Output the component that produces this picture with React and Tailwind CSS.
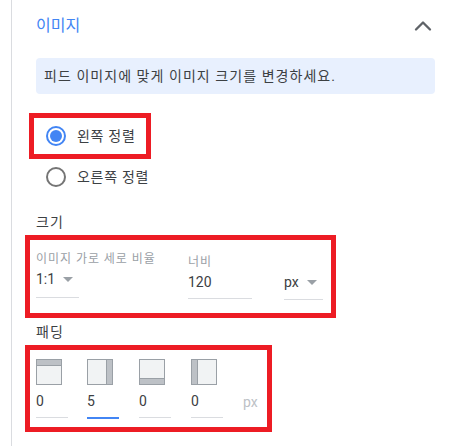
import { ChevronUp } from 'lucide-react'

const font = 'font-["Roboto","Noto_Sans_CJK_KR",sans-serif]'

function Arrow() {
  return <span className="w-0 h-0 border-x-[5px] border-x-transparent border-t-[5px] border-t-[#9aa0a6]" />
}

function Radio({ checked, label }) {
  return (
    <div className="flex items-center h-[40px]">
      <span className={`w-[20px] h-[20px] rounded-full border-2 flex items-center justify-center ${checked ? 'border-[#4285f4]' : 'border-[#757575]'}`}>
        {checked && <span className="w-[12px] h-[12px] rounded-full bg-[#4285f4]" />}
      </span>
      <span className="ml-[11px] text-[14px] leading-[20px] tracking-[0.7px] text-[#3c4043]">{label}</span>
    </div>
  )
}

function PaddingIcon({ side }) {
  const bars = {
    top: 'left-0 right-0 top-0 h-[6px] border-b',
    right: 'top-0 bottom-0 right-0 w-[6px] border-l',
    bottom: 'left-0 right-0 bottom-0 h-[6px] border-t',
    left: 'top-0 bottom-0 left-0 w-[6px] border-r',
  }
  return (
    <div className="relative w-[26px] h-[26px] border border-[#9aa0a6] bg-[#f1f3f4]">
      <div className={`absolute bg-[#bdc1c6] border-[#9aa0a6] ${bars[side]}`} />
    </div>
  )
}

function PaddingField({ side, value, active }) {
  return (
    <div className="w-[32px] mr-[20px] first:mr-[19px]">
      <PaddingIcon side={side} />
      <div className="mt-[6px] h-[20px] text-[14px] leading-[20px] text-[#3c4043]">{value}</div>
      <div className={`mt-[6px] ${active ? 'h-[2px] bg-[#4285f4]' : 'h-px bg-[#dadce0] mb-px'}`} />
    </div>
  )
}

export default function App() {
  return (
    <div className={`w-[450px] h-[446px] overflow-hidden bg-white pl-[11px] ${font}`}>
      <div className="h-full border-l border-[#dadce0] pl-[13px] pr-[15px]">
        <div className="flex items-center justify-between pl-[11px] pt-[2px] h-[58px] pb-[9px]">
          <span className="text-[16px] leading-[22px] text-[#4285f4]">이미지</span>
          <ChevronUp size={28} strokeWidth={2} className="text-[#5f6368] mr-[-2px] mt-[1px]" />
        </div>

        <div className="ml-[11px] h-[36px] rounded bg-[#e8f0fe] pl-[8px] flex items-center text-[14px] leading-[20px] tracking-[1.05px] text-[#3c4043]">
          피드 이미지에 맞게 이미지 크기를 변경하세요.
        </div>

        <div className="mt-[19px] ml-[4px] w-[122px] h-[46px] border-[5px] border-[#ed1c24] pl-[12px] flex items-center">
          <Radio checked label="왼쪽 정렬" />
        </div>
        <div className="ml-[21px] mt-[-2px]">
          <Radio label="오른쪽 정렬" />
        </div>

        <div className="ml-[11px] mt-[15px] text-[14px] leading-[20px] tracking-[1px] text-[#3c4043]">크기</div>
        <div className="mt-[3px] w-[311px] h-[83px] border-[5px] border-[#ed1c24] pl-[6px] flex">
          <div className="w-[152px] pt-[11px]">
            <div className="text-[12px] leading-[16px] tracking-[0.95px] whitespace-nowrap text-[#9aa0a6]">이미지 가로 세로 비율</div>
            <div className="flex items-center gap-[8px] h-[20px] mt-[2px] text-[14px] text-[#3c4043]">
              1:1 <Arrow />
            </div>
            <div className="mt-[8px] w-[43px] h-px bg-[#dadce0]" />
          </div>
          <div className="w-[96px] pt-[14px]">
            <div className="text-[12px] leading-[16px] tracking-[1px] text-[#9aa0a6]">너비</div>
            <div className="w-[64px] h-[20px] mt-[2px] text-[14px] leading-[20px] text-[#3c4043]">120</div>
            <div className="mt-[6px] w-[64px] h-px bg-[#dadce0]" />
          </div>
          <div className="pt-[32px]">
            <div className="flex items-center gap-[8px] h-[20px] text-[14px] text-[#3c4043]">
              px <Arrow />
            </div>
            <div className="mt-[7px] w-[39px] h-px bg-[#dadce0]" />
          </div>
        </div>

        <div className="ml-[11px] mt-[4px] text-[14px] leading-[20px] tracking-[1px] text-[#3c4043]">패딩</div>
        <div className="mt-[3px] w-[247px] h-[87px] border-[5px] border-[#ed1c24] pl-[6px] pt-[9px] flex">
          <PaddingField side="top" value="0" />
          <PaddingField side="right" value="5" active />
          <PaddingField side="bottom" value="0" />
          <PaddingField side="left" value="0" />
          <div className="mt-[33px] text-[14px] leading-[20px] text-[#bdc1c6]">px</div>
        </div>
      </div>
    </div>
  )
}
